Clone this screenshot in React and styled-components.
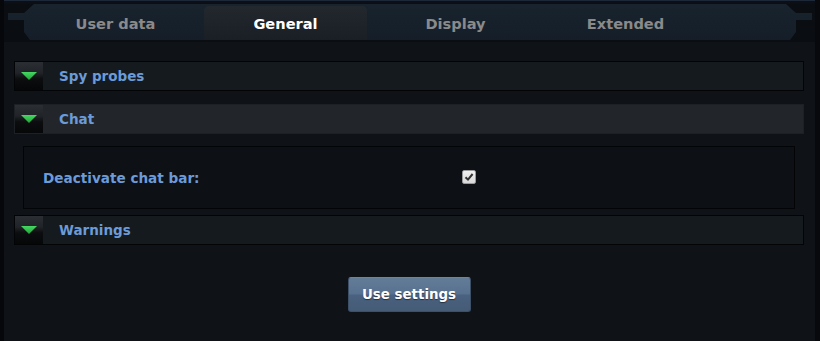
import React from "react";
import styled, { createGlobalStyle } from "styled-components";

const Global = createGlobalStyle`
  html, body { margin: 0; padding: 0; background: #0e1217; }
  body { font-family: "DejaVu Sans", Verdana, sans-serif; }
  * { box-sizing: border-box; }
`;

const Page = styled.div`
  width: 820px;
  height: 341px;
  background: #0f1318;
  border-left: 4px solid #06070a;
  border-right: 5px solid #08090c;
  display: flex;
  flex-direction: column;
  overflow: hidden;
`;

const TabBar = styled.div`
  height: 42px;
  background: linear-gradient(#0c1016 0, #0c1016 2px, #0a0d11 3px, #0a0d11 100%);
  border-top: 1px solid #1c2838;
  padding: 3px 3px 2px 4px;
  display: flex;
`;

const TabShape = styled.div`
  flex: 1;
  height: 36px;
  background: linear-gradient(#18232e, #151e28);
  clip-path: polygon(
    26px 0, calc(100% - 26px) 0, calc(100% - 16px) 9px, 100% 9px, 100% 16px,
    calc(100% - 16px) 16px, calc(100% - 16px) 28px, calc(100% - 22px) 36px,
    22px 36px, 16px 28px, 16px 16px, 0 16px, 0 9px, 16px 9px
  );
  display: flex;
  align-items: flex-end;
  gap: 7px;
  padding-left: 26px;
`;

const Tab = styled.div`
  width: 163px;
  height: 34px;
  display: flex;
  align-items: center;
  justify-content: center;
  font-weight: bold;
  font-size: 14.6px;
  color: ${(p) => (p.$active ? "#ffffff" : "#8a8a8a")};
  border-radius: 5px 5px 0 0;
  background: ${(p) =>
    p.$active ? "linear-gradient(#23282f, #1a1f25)" : "transparent"};
  padding-top: 1px;
`;

const Content = styled.div`
  padding: 19px 11px 0 10px;
  display: flex;
  flex-direction: column;
`;

const Header = styled.div`
  height: 30px;
  display: flex;
  align-items: stretch;
  border: 1px solid ${(p) => (p.$open ? "#1d2125" : "#030405")};
  background: ${(p) => (p.$open ? "#22262a" : "#151a1e")};
  margin-bottom: ${(p) => p.$mb || 0}px;
`;

const IconCell = styled.div`
  width: 28px;
  display: flex;
  align-items: center;
  justify-content: center;
  background: linear-gradient(#2b2f33 0%, #202327 40%, #0c0d0f 60%, #060708 100%);
`;

const Title = styled.div`
  display: flex;
  align-items: center;
  padding-left: 16px;
  font-weight: bold;
  font-size: 13.5px;
  color: #6b9bd9;
`;

const Panel = styled.div`
  margin: 0 9px 6px 9px;
  height: 63px;
  border: 1px solid #030405;
  background: #0d1015;
  display: flex;
  align-items: center;
  padding-left: 19px;
`;

const Label = styled.div`
  width: 419px;
  font-weight: bold;
  font-size: 13.6px;
  color: #6b9bd9;
`;

const CheckBox = styled.span`
  width: 14px;
  height: 14px;
  border: 1px solid #9a9a9a;
  border-radius: 2px;
  background: linear-gradient(#f2f2f2, #d8d8d8);
  display: flex;
  align-items: center;
  justify-content: center;
  margin-top: -1px;
`;

const ButtonRow = styled.div`
  display: flex;
  justify-content: center;
  padding-top: 32px;
`;

const Button = styled.button`
  width: 123px;
  height: 35px;
  border: 1px solid #3d5068;
  border-top-color: #6b84a0;
  border-radius: 3px;
  background: linear-gradient(#627c98 0%, #587190 48%, #4a6180 52%, #455b76 100%);
  color: #ffffff;
  font-family: "DejaVu Sans", Verdana, sans-serif;
  font-weight: bold;
  font-size: 13.4px;
  text-shadow: 0 1px 1px rgba(0, 0, 0, 0.5);
  padding: 0;
`;

const Arrow = () => (
  <svg width="16" height="8" viewBox="0 0 16 8">
    <defs>
      <linearGradient id="ag" x1="0" y1="0" x2="0" y2="1">
        <stop offset="0" stopColor="#46d862" />
        <stop offset="1" stopColor="#22a23a" />
      </linearGradient>
    </defs>
    <polygon points="0,0 16,0 8,8" fill="url(#ag)" />
  </svg>
);

const Check = () => (
  <svg width="10" height="10" viewBox="0 0 10 10">
    <path d="M1.5 5.2 L4 7.6 L8.6 2" fill="none" stroke="#333" strokeWidth="2" />
  </svg>
);

const Section = ({ title, open, mb }) => (
  <Header $open={open} $mb={mb}>
    <IconCell>
      <Arrow />
    </IconCell>
    <Title>{title}</Title>
  </Header>
);

export default function App() {
  const tabs = ["User data", "General", "Display", "Extended"];
  return (
    <>
      <Global />
      <Page>
        <TabBar>
          <TabShape>
            {tabs.map((t) => (
              <Tab key={t} $active={t === "General"}>
                {t}
              </Tab>
            ))}
          </TabShape>
        </TabBar>
        <Content>
          <Section title="Spy probes" mb={13} />
          <Section title="Chat" open mb={12} />
          <Panel>
            <Label>Deactivate chat bar:</Label>
            <CheckBox>
              <Check />
            </CheckBox>
          </Panel>
          <Section title="Warnings" />
          <ButtonRow>
            <Button>Use settings</Button>
          </ButtonRow>
        </Content>
      </Page>
    </>
  );
}
